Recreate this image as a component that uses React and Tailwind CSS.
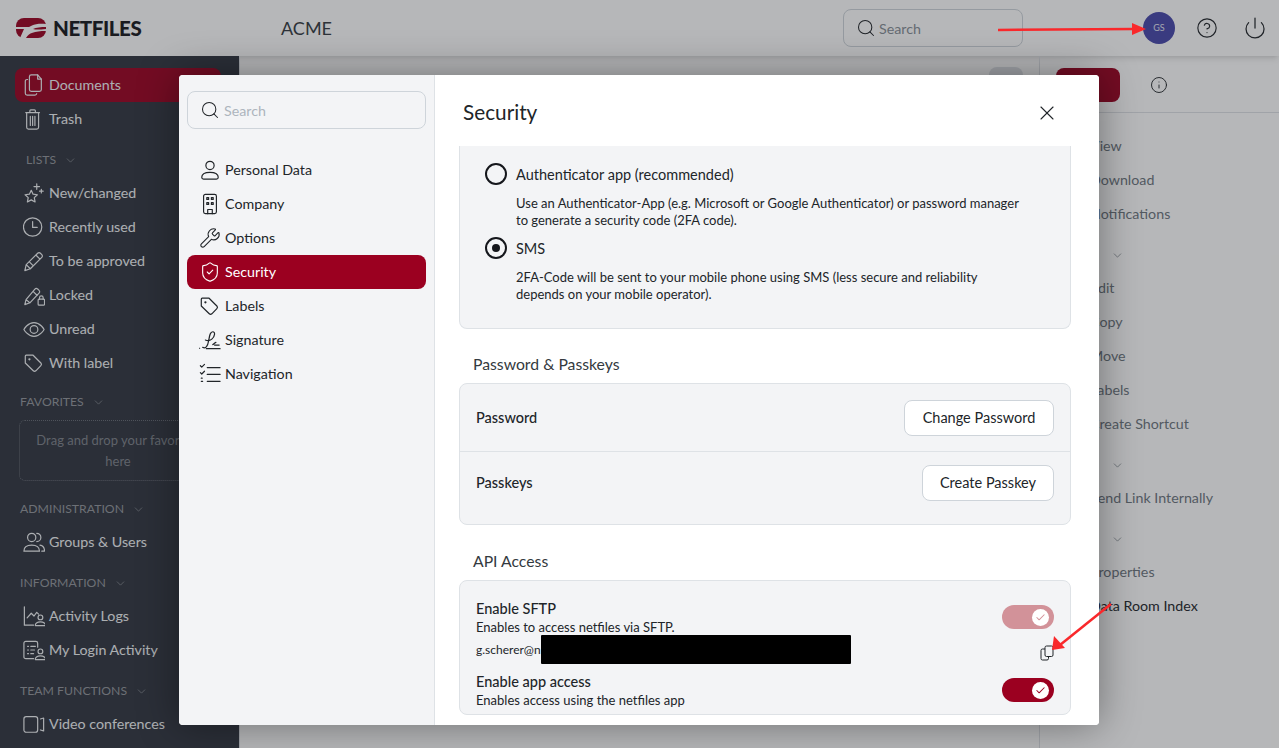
import React from 'react';
import { Check, ChevronDown, CircleHelp, Info, Power, Search, ShieldCheck, Wrench, X } from 'lucide-react';

const font = "font-['Lato','Noto_Sans',sans-serif]";

function Ic({ children }) {
	return (
		<svg width="22" height="22" viewBox="0 0 24 24" fill="none" stroke="currentColor" strokeWidth="1.3" strokeLinecap="round" strokeLinejoin="round">
			{children}
		</svg>
	);
}

const person = (
	<>
		<circle cx="19" cy="13.5" r="2.6" />
		<path d="M13.5 22.5c-.5-2.5 2-4 5.5-4s6 1.500 5.500 4Z" />
	</>
);

const DocsIcon = () => (
	<Ic>
		<path d="M5 6H4.500A2 2 0 0 0 2.500 8v13a2 2 0 0 0 2 2H13a2 2 0 0 0 2-1.500" />
		<path d="M7 3a2 2 0 0 1 2-2h7l4 4.500V17a2 2 0 0 1-2 2H9a2 2 0 0 1-2-2Z" />
		<path d="M16 1v4.500h4" />
	</Ic>
);
const TrashIcon = () => (
	<Ic>
		<path d="M3 5h15M7.500 5V3a1 1 0 0 1 1-1h4a1 1 0 0 1 1 1v2M4 5v16a2 2 0 0 0 2 2h9a2 2 0 0 0 2-2V5M8 9v10M10.500 9v10M13 9v10" />
	</Ic>
);
const StarIcon = () => (
	<Ic>
		<path d="M9 9l2 4.300 4.700.6-3.400 3.200.9 4.700L9 19.500l-4.200 2.300.9-4.700-3.400-3.200 4.700-.6Z" />
		<path d="M15 2v6M12 5h6M20 8v4M18 10h4" />
	</Ic>
);
const ClockIcon = () => (
	<Ic>
		<circle cx="10.500" cy="12" r="10" />
		<path d="M10.500 6v6.500h5" />
	</Ic>
);
const PencilIcon = () => (
	<Ic>
		<path d="M2 22.500l1.500-6.500L16 3.500a2.100 2.100 0 0 1 3 0l1.500 1.500a2.100 2.100 0 0 1 0 3L8 20.500ZM14 5.500l4.500 4.500M3.500 16l4.500 4.500M7 13l4 4" />
	</Ic>
);
const LockedIcon = () => (
	<Ic>
		<path d="M2 22.500l1.300-5.500L13 5.500a2 2 0 0 1 3 0l1.500 1.500a2 2 0 0 1 0 3L7.500 20.500ZM11 8l4.500 4.500M3.300 17l4.200 3.500" />
		<rect x="16.500" y="16.500" width="7" height="6.500" rx="1" />
		<path d="M18 16.500v-1.500a2 2 0 0 1 4 0v1.500" />
	</Ic>
);
const EyeIcon = () => (
	<Ic>
		<path d="M1 12.500s4-7.500 11-7.500 11 7.500 11 7.500-4 7.500-11 7.500S1 12.500 1 12.500Z" />
		<circle cx="12" cy="12.500" r="4.200" />
	</Ic>
);
const TagIcon = () => (
	<Ic>
		<path d="M3.500 3.500h7.500l8.500 8.500a2 2 0 0 1 0 2.800L14 20.500a2 2 0 0 1-2.800 0L2.500 12V4.500a1 1 0 0 1 1-1Z" />
		<circle cx="7" cy="8" r=".6" />
	</Ic>
);
const UsersIcon = () => (
	<Ic>
		<circle cx="9.500" cy="7" r="4.500" />
		<path d="M1 22c0-4.500 3-6.500 8.500-6.500S18 17.500 18 22ZM15 2.500a4.500 4.500 0 0 1 0 9M18.500 15.500c3 .5 5 2.500 5 6.500h-3" />
	</Ic>
);
const ActivityIcon = () => (
	<Ic>
		<path d="M1.500 2v20h10M4.500 14l4.500-5 3 3 3-4 2 2" />
		{person}
	</Ic>
);
const LoginIcon = () => (
	<Ic>
		<path d="M11.500 21.500H3a2 2 0 0 1-2-2V4.500a2 2 0 0 1 2-2h11a2 2 0 0 1 2 2V9M5 8h1M8.500 8h5M5 12h1M8.500 12h4M5 16h1M8.500 16h3" />
		{person}
	</Ic>
);
const VideoIcon = () => (
	<Ic>
		<rect x="1" y="4" width="15" height="17" rx="2.500" />
		<path d="M19 6.500l3.500-1v14l-3.500-1" />
	</Ic>
);
const UserIcon = () => (
	<Ic>
		<circle cx="12" cy="7" r="4.500" />
		<path d="M3 20c0-4 4-5.500 9-5.500s9 1.500 9 5.500a2 2 0 0 1-2 2H5a2 2 0 0 1-2-2Z" />
	</Ic>
);
const BuildingIcon = () => (
	<Ic>
		<rect x="5" y="1.500" width="14" height="21" rx="2" />
		<path d="M9.500 22.500v-4.500h5v4.500" />
		<rect x="8.500" y="5" width="2" height="2" />
		<rect x="13.500" y="5" width="2" height="2" />
		<rect x="8.500" y="10.500" width="2" height="2" />
		<rect x="13.500" y="10.500" width="2" height="2" />
	</Ic>
);
const SignatureIcon = () => (
	<Ic>
		<path d="M.5 21h.2M8 21.500h15M4 20c3.500 2 5.500-1.500 6.500-7S12 3 15 3s2.500 5-1 8c-2 1.700-5 2-7 1M15 17c1.500-.5 2.500-2.500 3.500-2.500M17 17.500h5" />
	</Ic>
);
const ChecksIcon = () => (
	<Ic>
		<path d="M9 5h14M9 12.500h14M9 20h14M1.500 3l1.500 1.500L6 1.500M1.500 10.500l1.500 1.500 3-3M2.500 20h1.500M2.500 16.500h1" />
	</Ic>
);
const ShieldIcon = () => <ShieldCheck size={22} strokeWidth={1.2} />;
const WrenchIcon = () => <Wrench size={22} strokeWidth={1.2} />;

function NavItem({ icon: Icon, label, active }) {
	return (
		<div className={`flex h-[34px] items-center rounded-lg pl-[8px] text-[14.25px] text-[#f1f3f5] ${active ? 'bg-[#9b0020]' : ''}`}>
			<span className="w-[26px] shrink-0">
				<Icon />
			</span>
			<span className="whitespace-nowrap">{label}</span>
		</div>
	);
}

function NavLabel({ children, className = '' }) {
	return (
		<div className={`flex h-[18px] items-center gap-[8px] text-[12.25px] text-[#92959c] ${className}`}>
			{children}
			<ChevronDown size={13} strokeWidth={1.25} />
		</div>
	);
}

function Sidebar() {
	return (
		<aside className="flex w-[239px] shrink-0 flex-col bg-[#30353f] pl-[15px] pt-[12px]">
			<div className="w-[206px]">
				<NavItem icon={DocsIcon} label="Documents" active />
				<NavItem icon={TrashIcon} label="Trash" />
			</div>
			<NavLabel className="mt-[15px] pl-[11px]">LISTS</NavLabel>
			<div className="mt-[7px]">
				<NavItem icon={StarIcon} label="New/changed" />
				<NavItem icon={ClockIcon} label="Recently used" />
				<NavItem icon={PencilIcon} label="To be approved" />
				<NavItem icon={LockedIcon} label="Locked" />
				<NavItem icon={EyeIcon} label="Unread" />
				<NavItem icon={TagIcon} label="With label" />
			</div>
			<NavLabel className="mt-[13px] pl-[5px]">FAVORITES</NavLabel>
			<div className="mt-[9px] ml-[4px] mr-[22px] flex h-[61px] flex-col items-center justify-center rounded-md border border-dotted border-[#666a73] text-center text-[13px] leading-[21px] text-[#7e828a]">
				<span className="whitespace-nowrap">Drag and drop your favorites</span>
				<span>here</span>
			</div>
			<NavLabel className="mt-[19px] pl-[5px]">ADMINISTRATION</NavLabel>
			<div className="mt-[7px]">
				<NavItem icon={UsersIcon} label="Groups & Users" />
			</div>
			<NavLabel className="mt-[15px] pl-[5px]">INFORMATION</NavLabel>
			<div className="mt-[7px]">
				<NavItem icon={ActivityIcon} label="Activity Logs" />
				<NavItem icon={LoginIcon} label="My Login Activity" />
			</div>
			<NavLabel className="mt-[15px] pl-[5px]">TEAM FUNCTIONS</NavLabel>
			<div className="mt-[7px]">
				<NavItem icon={VideoIcon} label="Video conferences" />
			</div>
		</aside>
	);
}

function Header() {
	return (
		<header className="flex h-[56px] shrink-0 items-center bg-white pl-[16px] shadow-md">
			<div className="flex w-[265px] items-center gap-[7px]">
				<svg width="30" height="20" viewBox="0 0 30 20">
					<rect width="30" height="20" rx="8" fill="#9b0020" />
					<path d="M30 6C24 5.500 19 6 16 7.500L13 9H0V11H8L4 20H10C13 15 18 13 30 13V11C24 11.500 20 12 17 11C20 9.500 25 9 30 9Z" fill="#fff" />
				</svg>
				<span className="text-[20.5px] font-black tracking-[-0.4px] text-[#15171c]">NETFILES</span>
			</div>
			<span className="text-[18px] text-[#343a40]">ACME</span>
			<div className="ml-[511px] flex h-[38px] w-[180px] items-center gap-[3px] rounded-lg border border-[#ced4da] pl-[12px] text-[14.25px] text-[#868e96]">
				<Search size={20} strokeWidth={1.25} className="text-[#212529]" />
				<span className="pt-[1px]">Search</span>
			</div>
			<div className="ml-[120px] flex h-[32px] w-[32px] items-center justify-center rounded-full bg-[#4646ab] text-[9px] text-[#e4e4f0]">GS</div>
			<CircleHelp size={22} strokeWidth={1.25} className="ml-[21px] text-[#212529]" />
			<Power size={24} strokeWidth={1.25} className="ml-[25px] text-[#212529]" />
		</header>
	);
}

const rightGroups = [
	['View', 'Download', 'Notifications'],
	['Edit', 'Copy', 'Move', 'Labels', 'Create Shortcut'],
	['Send Link Internally'],
	['Properties', 'Data Room Index'],
];

function RightPanel() {
	return (
		<div className="w-[240px] shrink-0 border-l border-[#dee2e6]">
			<div className="flex h-[57px] items-center border-b border-[#dee2e6] pl-[16px] pt-[2px]">
				<div className="h-[34px] w-[64px] rounded-lg bg-[#9b0020]" />
				<Info size={18} strokeWidth={1.25} className="ml-[30px] text-[#212529]" />
			</div>
			<div className="pl-[50px] pt-[16px] text-[14.25px] text-[#6c757d]">
				{rightGroups.map((group, i) => (
					<div key={group[0]}>
						{i > 0 && (
							<div className="h-[40px] pl-[21px] pt-[18px]">
								<ChevronDown size={13} strokeWidth={1.25} />
							</div>
						)}
						{group.map((label) => (
							<div key={label} className={`flex h-[34px] items-center whitespace-nowrap ${label === 'Data Room Index' ? 'text-[#212529]' : ''}`}>
								{label}
							</div>
						))}
					</div>
				))}
			</div>
		</div>
	);
}

function ModalNav() {
	const items = [
		[UserIcon, 'Personal Data'],
		[BuildingIcon, 'Company'],
		[WrenchIcon, 'Options'],
		[ShieldIcon, 'Security', true],
		[TagIcon, 'Labels'],
		[SignatureIcon, 'Signature'],
		[ChecksIcon, 'Navigation'],
	];
	return (
		<div className="w-[256px] shrink-0 border-r border-[#dee2e6] bg-[#f3f4f6] px-[8px] pt-[16px]">
			<div className="flex h-[38px] w-[239px] items-center gap-[4px] rounded-lg border border-[#ced4da] pl-[12px] text-[14.25px] text-[#adb5bd]">
				<Search size={20} strokeWidth={1.25} className="text-[#212529]" />
				<span className="pt-[1px]">Search</span>
			</div>
			<div className="mt-[24px] w-[239px]">
				{items.map(([Icon, label, active]) => (
					<div key={label} className={`flex h-[34px] items-center rounded-lg pl-[12px] text-[14.25px] ${active ? 'bg-[#9b0020] text-white' : 'text-[#212529]'}`}>
						<span className="w-[26px] shrink-0">
							<Icon />
						</span>
						<span>{label}</span>
					</div>
				))}
			</div>
		</div>
	);
}

function Radio({ checked, label, children }) {
	return (
		<div>
			<div className="flex h-[22px] items-center gap-[9px]">
				<div className="flex h-[22px] w-[22px] items-center justify-center rounded-full border-2 border-[#15171c]">
					{checked && <div className="h-[8px] w-[8px] rounded-full bg-[#15171c]" />}
				</div>
				<span className="pt-[1px] text-[14.5px] text-[#212529]">{label}</span>
			</div>
			<div className="mt-[10px] pl-[31px] text-[13px] leading-[17px] text-[#212529]">{children}</div>
		</div>
	);
}

function Toggle({ faded, className = '' }) {
	return (
		<div className={`flex h-[24px] w-[52px] items-center justify-end rounded-full pr-[5px] ${faded ? 'bg-[#d29299]' : 'bg-[#9b0020]'} ${className}`}>
			<div className="flex h-[17px] w-[17px] items-center justify-center rounded-full bg-white">
				<Check size={11} strokeWidth={2.25} className={faded ? 'text-[#d29299]' : 'text-[#9b0020]'} />
			</div>
		</div>
	);
}

function CopyIcon() {
	return (
		<svg width="14" height="16" viewBox="0 0 14 16" fill="none" stroke="#212529" strokeWidth="1" className="mt-[10px]">
			<rect x="5" y="1" width="8" height="10.500" rx="1.500" />
			<path d="M5 4H2.500A1.500 1.500 0 0 0 1 5.500v8A1.500 1.500 0 0 0 2.500 15H7a1.500 1.500 0 0 0 1.500-1.500v-2" />
		</svg>
	);
}

function SecurityPane() {
	return (
		<div className="flex min-w-0 flex-1 flex-col bg-white">
			<div className="flex h-[71px] shrink-0 items-center justify-between pl-[28px] pr-[40px] pt-[4px]">
				<span className="text-[20.75px] text-[#212529]">Security</span>
				<X size={24} strokeWidth={1.1} className="text-[#212529]" />
			</div>
			<div className="min-h-0 flex-1 overflow-hidden pl-[24px] pr-[28px]">
				<div className="flex h-[183px] flex-col gap-[8px] rounded-b-lg border border-t-0 border-[#dee2e6] bg-[#f3f4f6] pl-[25px] pt-[17px]">
					<Radio label="Authenticator app (recommended)">
						Use an Authenticator-App (e.g. Microsoft or Google Authenticator) or password manager<br />
						to generate a security code (2FA code).
					</Radio>
					<Radio checked label="SMS">
						2FA-Code will be sent to your mobile phone using SMS (less secure and reliability<br />
						depends on your mobile operator).
					</Radio>
				</div>
				<div className="mt-[24px] pl-[14px] text-[15.75px] leading-[21px] text-[#343a40]">Password & Passkeys</div>
				<div className="mt-[9px] h-[142px] rounded-lg border border-[#dee2e6] bg-[#f3f4f6] text-[14.5px] text-[#212529]">
					<div className="flex h-[68px] items-center justify-between border-b border-[#dee2e6] px-[16px]">
						<span className="pt-[1px] font-medium">Password</span>
						<div className="flex h-[36px] w-[150px] items-center justify-center rounded-lg border border-[#ced4da] bg-white pt-[1px]">Change Password</div>
					</div>
					<div className="flex h-[62px] items-center justify-between px-[16px]">
						<span className="font-medium">Passkeys</span>
						<div className="flex h-[36px] w-[132px] items-center justify-center rounded-lg border border-[#ced4da] bg-white">Create Passkey</div>
					</div>
				</div>
				<div className="mt-[25px] pl-[14px] text-[15.75px] leading-[21px] text-[#343a40]">API Access</div>
				<div className="mt-[9px] h-[135px] rounded-lg border border-[#dee2e6] bg-[#f3f4f6] px-[16px] pt-[18px] text-[#212529]">
					<div className="flex h-[36px] justify-between">
						<div>
							<div className="text-[14.5px] font-medium leading-[19px]">Enable SFTP</div>
							<div className="text-[13px] leading-[18px]">Enables to access netfiles via SFTP.</div>
						</div>
						<Toggle faded className="mt-[6px]" />
					</div>
					<div className="flex h-[29px] items-start justify-between text-[12px]">
						<div className="flex h-[29px] items-center">
							<span className="w-[65px] whitespace-nowrap">g.scherer@n</span>
							<div className="relative h-[29px] w-[310px] rounded-[1px] bg-black" />
						</div>
						<CopyIcon />
					</div>
					<div className="mt-[8px] flex justify-between">
						<div>
							<div className="text-[14.5px] font-medium leading-[19px]">Enable app access</div>
							<div className="text-[13px] leading-[18px]">Enables access using the netfiles app</div>
						</div>
						<Toggle className="mt-[6px]" />
					</div>
				</div>
			</div>
		</div>
	);
}

export default function App() {
	return (
		<div className={`relative flex h-[748px] w-[1279px] flex-col overflow-hidden bg-white ${font}`}>
			<Header />
			<div className="flex min-h-0 flex-1">
				<Sidebar />
				<div className="min-w-0 flex-1 border-l border-[#dee2e6]">
					<div className="mt-[11px] ml-[749px] h-[34px] w-[34px] rounded-lg bg-[#dee2e6]" />
				</div>
				<RightPanel />
			</div>

			{/* backdrop */}
			<div className="absolute inset-0 bg-[#212529]/[0.33]" />

			{/* dialog */}
			<div className="absolute left-[179px] top-[75px] flex h-[650px] w-[920px] overflow-hidden rounded-[4px] bg-white shadow-[0_0_40px_rgba(0,0,0,0.4)]">
				<ModalNav />
				<SecurityPane />
			</div>

			{/* annotation arrows */}
			<svg className="absolute left-0 top-0" width="1279" height="748" viewBox="0 0 1279 748">
				<path d="M998 30L1134 29" stroke="#f9282b" strokeWidth="2.5" fill="none" />
				<path d="M1132 23L1146 29L1132 35Z" fill="#f9282b" />
				<path d="M1111 604L1060 645" stroke="#f9282b" strokeWidth="2.5" fill="none" />
				<path d="M1054 636L1052 650L1065 648Z" fill="#f9282b" />
			</svg>
		</div>
	);
}
